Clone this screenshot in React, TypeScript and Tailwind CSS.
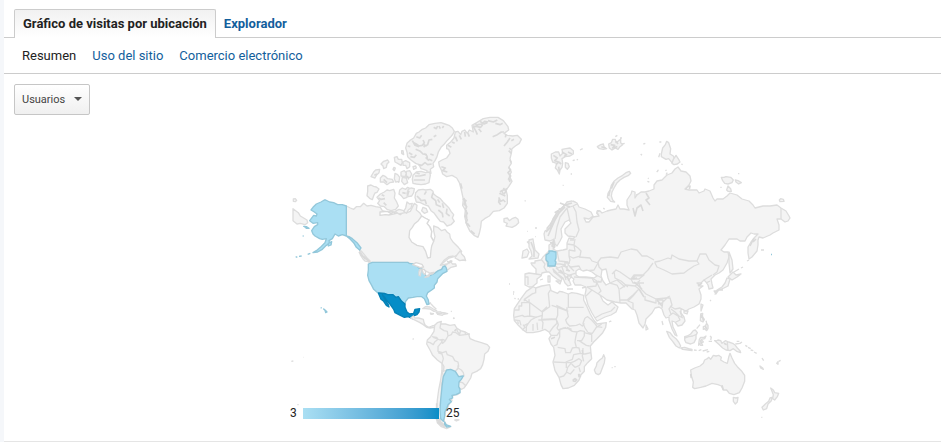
import React from "react";

type Tone = "land" | "light" | "dark";

interface Sheet {
  id: string;
  x: number;
  y: number;
  shapes: { d: string; tone?: Tone }[];
  water?: string[];
  borders?: string[];
  rough?: string[];
}

const tones: Record<Tone, string> = {
  land: "fill-[#f4f4f4] stroke-[#dddddd]",
  light: "fill-[#aadff3] stroke-[#92c7da]",
  dark: "fill-[#058dc7] stroke-[#0580b5]",
};

// Each sheet is drawn at three units per pixel around its own origin.
const sheets: Sheet[] = [
  {
    id: "north-america",
    x: 285,
    y: 190,
    shapes: [
      {
        d: "M184 48L196 54 206 58 214 50 226 50 236 40 246 48 258 46 272 50 286 52 292 62 306 66 322 64 334 70 346 66 356 64 366 68 376 64 382 52 388 40 396 46 394 60 404 68 410 78 420 84 432 90 426 100 436 112 440 124 438 140 446 154 450 140 446 122 446 108 458 112 470 122 480 118 486 126 494 132 496 144 504 156 520 172 530 184 526 190 508 200 492 204 480 214 466 226 484 222 478 232 452 248 436 250 420 242 396 228 368 217 258 217 246 210 232 196 224 180 206 158 192 142 184 138Z",
      },
      { d: "M482 226L490 220 496 212 502 222 512 222 514 228 498 232 488 240 482 236Z" },
      { d: "M510 204L518 192 526 182 530 192 538 200 542 212 534 210 524 212 518 208Z" },
      { d: "M24 56l16 12 6 10 10 6 10 6 2 8-8 6-14-4-10 2-12-10z" },
      { d: "M25 27l6-1 4 5-4 4-6-1z" },
      {
        tone: "light",
        d: "M118 30l-10 6-14 6-10 10-6 8 10 6 8 6-2 6-8-2-12 16 10 8 14-2 0 6-10 6-8 12 4 10 6 6 14 8 8 2 12-2-4 12-12 12-14 12-10 6 14-2 14-8 12-12 10-6-2-8 10-6 8-14 10 6 12-4 12 4 12 10 10 10 8 14 10 8 4-6-12-16-14-12-10-6-8-2V48l-12-4H158l-12-6-12-2-12-6z",
      },
      { tone: "light", d: "M56 109l8 1 8 5-8 0zM53 138l3 0M32 200l5 2M42 199l8-1M68 193l8-3M130 160l10-5-2 10-8 3zM107 353l3 1M116 357l5 4 5 5-4 2-2-7z" },
      {
        tone: "light",
        d: "M250 222L262 217 368 217 372 220 386 222 396 228 404 236 416 240 420 252 424 260 436 256 448 250 460 242 470 238 474 230 480 228 484 234 486 244 474 250 466 258 458 266 456 276 448 286 448 294 440 300 428 308 424 318 430 330 432 342 426 344 418 326 410 320 396 320 384 322 370 324 362 334 360 342 350 334 340 320 332 322 324 314 308 314 298 310 278 308 266 298 260 286 252 272 248 256 250 240Z",
      },
      {
        tone: "dark",
        d: "M280 309L298 310 308 314 324 314 332 322 340 320 350 334 360 342 360 352 366 366 374 372 386 370 390 358 404 356 402 366 396 374 384 378 382 386 370 380 358 382 346 376 330 368 326 358 316 344 306 332 296 318 292 314 300 330 310 344 312 351 304 346 296 334 288 328Z",
      },
      { d: "M413 356l8-6 14 1 10 6 10 5-8 2-12-7-14-1zM456 370l8-3 12 1 12 3-12 2-4 3-14-3zM436 369l8 3-6 1z" },
    ],
    water: [
      "M400 92L388 102 382 112 374 122 372 142 380 156 396 166 414 170 422 184 428 204 436 202 438 180 440 168 446 154 438 140 440 124 434 110 426 100 432 90 420 84 410 78Z",
      "M285 66l22-2 10 6 10-4 4 5-20 4-10-1-16 2zM340 68l14-2-8 8z",
      "M383 224l10-6 8 2 10 3 5 8-11 2-6-3zM404 238l4 0 0 8-2 12-4-2 0-10zM412 238l6 0 4 8-2 8-6-6zM420 262l8-6 6-2-3 6zM432 252l8-4 8-1-6 5z",
    ],
    borders: [
      "M216 165l8 12 2 18 8 12 6 6 10 2 5 6M228 182l10 12 8 10 10 10M466 226l12-16 14-10 14-2",
      "M428 332l3 12M430 342l8-4M436 340l10 10 8 8M498 365l2-2M505 383l2 4",
    ],
    rough: ["M222 186l8 10 12 12", "M236 200l8 6 10 10", "M486 214l8 4 8-6"],
  },
  {
    id: "arctic-islands",
    x: 355,
    y: 110,
    shapes: [
      {
        d: "M176 84L184 70 192 66 202 58 212 54 222 44 240 40 258 38 270 42 282 46 292 54 298 64 294 72 286 82 276 92 268 102 258 112 250 126 246 140 240 152 234 160 236 170 226 178 228 190 216 192 216 182 206 178 198 176 192 164 182 160 168 150 158 140 156 126 152 114 156 100 164 92Z",
      },
      { d: "M174 196L184 186 198 184 212 188 224 186 226 196 224 206 222 218 212 222 198 224 184 222 174 220 172 208Z" },
      { d: "M182 248L190 240 204 238 212 240 226 238 234 244 236 252 246 260 256 266 264 276 274 286 282 294 288 304 296 314 292 324 298 334 288 344 276 348 266 336 256 334 248 324 238 310 228 302 220 288 208 284 196 278 184 276 180 262Z" },
      { d: "M38 228l10-3 8 4 8 2 8 6-6 10-6 2-4 8-4 12-8-4-8-8 2-12z" },
      { d: "M66 262L76 252 88 246 96 240 104 242 116 238 120 250 118 264 124 274 130 288 122 298 108 302 96 298 88 290 76 288 68 280 74 272Z" },
      { d: "M48 200l8-14 6-6 12-2-2 10-8 8-4 8z" },
      { d: "M76 204l8-8 8 4 6 6 14 2 4 8-12 2-8 6-10-8-10 0z" },
      { d: "M78 162l8-8 12-4 4 6-6 6-2 10-8 4-2-8z" },
      { d: "M118 142l8-2 4 8 10 0 2 10-4 8-10-6-8-4z" },
      { d: "M144 156l8-4 12 6 0 12-8 6-4-10-8 0z" },
      { d: "M120 190l8 4 6 8-2 12-10 2-4-10zM138 186l10-4 6 8-4 10-12-2zM154 184l10-2 6 10-4 10-12 0zM142 202l12 2 4 14-10 6-8-10z" },
      { d: "M134 240l8-6 10 4 6-6 8 4-8 12-2 14-10 4-8-10-6-4z" },
      { d: "M160 238l8-4 10 2-2 12-6 10-10 2-4-10z M114 178l3-6 4 2-3 8zM140 122l4 0 2 12-6-4zM174 170l8-2 2 6-8 4zM204 292l10 4 4 10-10 4-8-8z" },
      { d: "M156 276l8 6 8-2-4 14-8 6-6 10-8-6 6-10zM120 304l12-6 14 4 4 6-18 4z" },
    ],
    rough: [
      "M176 98l8 4 8 6 10-2 6-8-4-8M184 80l10 4 6-8M204 102l8 6 6-4 4-14 10-2M182 118l14 6 8 8 12 2M208 130l8 8 2 12M166 140l12 2 6-8M190 164l10 2 10-8 8 6 12-2M236 52l8 4 4-8M252 48l4 8M172 92l8 14 12 4M206 112l6-8M236 80l8-4M262 54l4-6M212 142l10 10M162 128l10 6M158 108l8 2M226 132l10 4M222 148l10 4",
      "M176 210l18 0 16 0M180 198l14 0 18-4M184 188l10 4M186 258l10 10 2 4 12-2 4 12M214 244l-6 10M234 248l-4 14 12 10 2 12 14 6M248 268l6 10M262 280l4 14M276 296l-2 14 10 8M250 300l12 10 2 12M70 264l8 4 12-2M80 254l8 4M86 278l8 8M58 196l8-4M86 208l10 10M162 242l-4 12M142 248l10 2M156 198l6 10M130 214l2 4",
    ],
  },
  {
    id: "greenland",
    x: 430,
    y: 110,
    shapes: [
      {
        d: "M26 156L36 150 50 144 60 130 56 118 50 116 50 106 62 96 72 84 76 66 84 64 92 74 96 64 104 60 112 70 118 60 130 66 126 46 140 38 160 26 180 22 204 22 220 32 234 50 236 60 222 70 232 76 248 78 262 76 274 88 268 100 256 108 246 116 244 130 240 146 244 160 236 172 244 186 238 198 246 214 236 230 228 240 232 256 232 280 222 294 208 302 190 304 178 318 164 326 154 334 152 352 148 370 144 382 132 376 120 364 110 344 104 320 106 300 98 286 100 268 94 240 88 218 80 204 66 196 50 200 38 192 34 180 28 168Z",
      },
      { d: "M222 326L232 324 238 332 246 326 256 322 264 328 266 338 258 346 246 352 236 350 228 348 232 340 222 336Z" },
      { d: "M284 273l3-1M292 364l2 0M315 380l2 0M292 396l8-2 8 4-6 8z" },
    ],
    rough: [
      "M128 48l10 2 6-6 12-2 8-8 10 2M130 50l8 14 4 10M136 40l6 10 10 2 6-8M150 34l12 8 10-4M76 80l6 14M88 76l6 12M104 66l2 14M114 70l4 10M66 96l8 4M54 106l10 6M146 56l8 10M188 80l14-6 12-8 8 0M228 74l-2 8M240 84l-8 12-10 12M252 88l-8 4M238 114l6 6M236 122l8 8M240 150l4 8M174 32l16 4 12-6M196 40l14 4 8-4M236 172l6 8-8 8 8 10-6 8 4 10M234 206l8 6M210 246l10-6 12-4M206 262l6 12 8-4 6 6M212 284l-6-8 2-10M208 250l18 8M34 170l12 4-8 8 14 4M92 220l4 16M98 266l10 6-6 10 8 8-4 10M106 300l6 10-6 8 6 12-4 8 8 8M112 340l8 10M122 362l12 10M220 234l8 10-6 8",
      "M102 264l6 24M108 300l2 24M214 240l6 12",
    ],
  },
  {
    id: "arctic-russia",
    x: 540,
    y: 130,
    shapes: [
      { d: "M34 72L46 66 56 66 60 78 68 70 66 58 78 56 90 54 100 62 100 72 90 78 76 80 66 86 68 100 66 112 60 120 58 132 52 120 46 114 50 100 38 96 34 84Z" },
      { d: "M76 98l8 2 4 10-6 8-6-6zM98 92l6-2M110 90l4-2M120 60l8-4M92 132l4 0M68 166l3 0" },
      { d: "M172 50l10-6 8-2 2 8 8 6-10 2-12-2zM206 42l8-4 4-10 8 0 2 10 8-6 6-4 0 10 6 6-8 6-6 8-8-4-10 6-8-6zM226 20l6-4M246 42l8-2M240 24l6 0M310 42l6-2M302 72l4 4" },
      { d: "M202 202L204 190 210 180 214 166 222 154 234 144 248 136 258 128 268 124 272 130 266 136 252 142 240 150 230 160 222 174 216 186 214 198 218 210 224 216 212 214Z" },
      { d: "M364 72l4-18 8-10 4-10 6 4 6 18-2 16 10 6 6 14-10 6-10-12-8 2-14-8z" },
      { d: "M356 82l4-12M324 144l2 2M322 154l6 2M352 122l4-2M376 122l4-2" },
      { d: "M172 242l6 0 4 8-6 6-6-6zM190 234l4 4" },
    ],
    rough: [
      "M40 76l12 8-8 8 12 4M48 104l8-8 8 6M66 66l14 8-8 6M84 66l12 6M56 110l2 14M184 50l12 4M212 44l12 2-6 8 14-4M228 34l6 8",
      "M210 180l-4 18M222 156l-8 20M44 248l10-6 4 8 8-10M56 236l10 4 6-14 8 4 6-12 12 0M80 216l10 6 10-8 10 6M20 296l10-12 12-18 16-18",
      "M284 212l4 16 6 14 4-12 6 0M310 190l4 16 14-8 4 16 2 12M290 192l8 12M318 192l10 8M272 240l8 22",
    ],
  },
  {
    id: "siberian-islands",
    x: 650,
    y: 130,
    shapes: [
      { d: "M66 100l4-12 8-12 8 12 4 8-8 6-10 2zM94 102l4 2M28 36l6 0" },
      { d: "M214 142l8 0 6-2 14 2 8 8-4 8-12 4-10-2-6-8zM256 150l8 2 10 6-8 4-8-6zM264 131l4 0M211 172l4 0" },
      { d: "M230 180l4-12 8 8 2 8-10 0zM388 210l4-4 8 2 2 6-12 1zM24 122l-4 4M48 134l4-6" },
    ],
    rough: ["M106 180l6-10 8-2-2 10M92 188l6-8 8 2M346 232l8-2 2 8-8-2M0 204v26"],
  },
];

const southSheets: Sheet[] = [
  {
    id: "south-america",
    x: 280,
    y: 310,
    shapes: [
      { d: "M392 24l8-6 4 6 12 0 14 4 2 10 4 8 10 6 10-4 8-2 0 6-14 2-10-2-10-8-10-6-12-6z" },
      {
        d: "M464 46L472 38 484 34 482 42 496 42 510 46 524 44 530 54 542 62 556 66 566 72 570 86 584 92 604 98 622 104 629 112 624 124 614 132 612 148 608 164 602 176 590 184 576 190 572 204 562 220 552 234 544 238 536 232 540 248 532 254 520 256 514 264 516 272 508 280 504 290 498 302 494 318 492 332 500 346 512 350 500 356 484 350 472 338 468 320 470 300 472 270 476 240 482 210 486 180 486 160 472 150 458 136 450 120 440 102 442 90 452 80 462 64Z",
      },
      {
        tone: "light",
        d: "M500 180L512 178 526 184 536 200 550 198 544 208 537 216 536 230 540 238 540 248 528 254 516 256 518 264 508 268 514 275 504 284 500 296 494 306 494 318 490 334 482 326 480 300 482 270 486 230 490 200Z",
      },
      { tone: "light", d: "M494 336l4 8 14 5-12 2-6-8z" },
      { d: "M452 10l10 1M468 6l14 0 4 4-12 1zM490 10l8 0M524 25l-4-1M398 86l3 2M34 154l6-1M70 142l1 0M52 284l4 0M524 330l6-1 7 1-8 3z" },
    ],
    borders: [
      "M482 42l-2 12 12 8 10 2 2 14-8 14-8-4M488 88l-4 10-10 12 0 14 14 4 10-4 4 10 16 6 6 12 10 4 2 12-4 12M442 96l8 2 10 6 4-8 10-8-4-6-14-2M460 82l20 8 8-2M504 78l10-4 4-8 10 2 10 8 18-2 14-2M530 54l2 10 8 10M542 62l-4 12M556 66v10M486 160l6 10-2 14 10-4M474 128l12 4 4 14-4 14M526 184l8-10 0-8M534 174l10 6 6 8 2 10-12 2M536 216l12 2 10 10M486 180l4 20-6 24 0 30-4 34M496 92l-8 8-4-10",
    ],
    rough: ["M470 300l4 14-2 16 8 8 8 2 6 10M472 336l14 10 10 6M468 326l12 8 8 8M478 324l6 20 10 4M470 280l0 32M524 64l4-6"],
  },
  {
    id: "africa",
    x: 505,
    y: 270,
    shapes: [
      {
        d: "M84 50L92 54 110 48 134 44 138 62 158 70 164 64 174 66 190 72 200 68 216 70 228 74 236 76 236 90 246 110 256 132 266 150 276 162 304 158 302 172 292 190 276 206 266 216 256 228 258 250 260 266 248 278 238 290 238 304 228 314 222 330 208 346 190 354 174 356 168 344 162 322 150 302 144 276 150 256 146 232 138 222 132 206 138 196 132 186 120 178 104 184 84 188 66 188 52 178 40 166 28 152 26 136 28 116 40 98 48 86 64 64 76 56Z",
      },
      { d: "M276 278l8-8 8-6 4-10 4 10-2 14-6 16-6 16-6 4-8-4-4-10 6-12z" },
      { d: "M28 85l4 1M38 88l4-2M24 66l4 0M314 154l5 0M320 293l3 0M328 290l4 0" },
    ],
    borders: [
      "M28 120h14l0-12 8 0 0-10h20M84 70l-26 18 0 6M92 54l0 14-10 4M72 88l0 8 40 30 22-16-2-20-2-20 6-10M58 88l16 12v38l-16 2-6-4-24 6M112 126l0 10-20 6-14 8-8 10-12 6M74 138l22 4M112 136l-2 12 44-2 4-10 0-24-18-6M154 106l32 16V112M190 72v40h46M186 122l4 18-8 10 4 10 8 8 20-2 10-4 8 6 6-8M158 112l32 12M126 110l-14 14M100 150l10 0 4 8-2 20M84 162v20M96 158l2 22M70 160l-6 10 0 14M54 164l6 8-8 8M28 150l16 2 4 14M38 154l2 8M110 150l44-2 2 12-12 12-10 14M156 152l4 12 -4 10 4 6 24-8M138 196h18l8-12 2-8M164 184l0 16-6 14-2 10-10 4M164 178l12-4 14 2 12 8 14 2-4 16-2 14 4 16-12 2-6 14-14 0-2-12-22-4M146 276l38 2 16 0M216 186l10-4 12 2 0 14-8 14-14 0M238 188l8 2 14 4 0 22M248 188l14 2 12-18 16-10M240 144l-6 16 6 14 8 12M240 144l8-4 12 10 12 14 4 6 16 2M222 212l22 14 10 2M212 232l10 2 4 16 -20 4 -4 14 -20 8M226 250l14 2 18-4M234 234l-2 24 4 16M198 278l10-4 14-8 8 6-6 14-14 6-10-10M200 278l-12 14-4 16-8 10 -14 4M184 278v16M184 306l12 6 12-14M222 292l4 14M186 172l14 6",
    ],
    rough: ["M205 329l5-3 5 3-4 5-6-1zM221 314l3 0 2 5-4 1z", "M232 240l2 14M138 206l12-4"],
  },
  {
    id: "oceania",
    x: 650,
    y: 300,
    shapes: [
      {
        d: "M122 210L134 204 150 198 160 190 164 180 172 176 176 172 182 178 190 166 198 168 206 166 214 172 212 180 222 186 232 190 236 172 240 160 246 174 254 190 262 200 274 212 284 226 284 244 276 264 268 278 252 284 238 280 230 270 220 270 214 258 204 254 186 250 168 258 152 262 134 266 128 262 130 246 124 228Z",
      },
      { d: "M250 292l8 2 6-2-2 14-6 6-6-8z" },
      { d: "M362 264l8 6 4 8 12 2-4 10-8 10-6-4 2-12-4-10zM366 292l-2 10-10 10-4 14-10 4-4-8 10-10 10-8 4-10zM334 352l3 0" },
      { d: "M330 198l8 6 2 4-8-4zM336 174l5 8M380 190l4-5 0 8zM386 184l6-3" },
      { d: "M50 94L60 98 68 108 78 116 86 126 92 138 88 144 78 138 68 124 58 112Z" },
      { d: "M92 144l12-2 12 4 10 2 0 4-12-2-16-2zM132 150l8 1M146 152l8-3M158 153l16-4M170 156l8-2" },
      { d: "M104 110l8-2 10-6 8-10 6-2 6 8-4 8 0 10-6 12-10 4-14-4-4-8z" },
      { d: "M146 132l2-14 4-6 10 0 6-4-4 8-10 2 6 8-6 2 4 8-6 0-4-6-2 6zM180 108l4 4-2 8M192 122l6 0M176 124l10 0" },
      { d: "M196 124L204 120 212 122 216 130 226 122 236 126 248 130 256 136 262 144 270 152 272 158 260 154 250 146 240 152 228 150 218 144 208 134Z" },
      { d: "M152 42l6-2-1 12 6 6-4 8-8-4zM160 80l6-2 4-8 4 6 0 10-4 6-6-6-4 2zM140 86l10-12M168 62l2 6M256 132l14-2 6-4M260 124l8 0M286 136l6 4M294 142l8 4M302 150l8 2M312 156l8 4" },
    ],
    borders: ["M232 126l2 26M104 114l12-4 12-2 10-4"],
    rough: ["M216 256l4 14M122 222l2 12M154 44l0 10M158 50l2 12M166 78l4 10M152 120l2 12M222 130l8 4"],
  },
];

const eurasia =
  "M567 202L572 201L577 203L579 207L585 209L591 212L593 216L589 219L584 218L586 222L589 222L593 217L599 216L597 212L600 211L602 213L607 211L611 210L616 209L618 205L620 209L624 209L629 210L627 205L627 200L631 194L632 191L635 192L635 198L637 195L641 192L645 192L649 191L654 189L654 185L657 181L662 180L665 177L667 175L672 173L675 169L678 167L681 171L686 172L690 176L691 181L689 185L685 189L689 190L697 190L699 193L704 191L705 189L710 191L713 198L715 201L717 199L723 199L727 196L730 193L737 195L742 199L749 201L753 205L755 208L763 206L770 206L777 205L781 208L786 211L789 216L790 218L788 221L785 222L781 219L777 219L779 225L779 230L773 233L770 235L763 238L759 237L758 240L758 245L757 251L752 257L749 259L748 253L748 247L751 242L755 237L758 234L754 234L751 233L747 237L745 241L740 241L737 239L729 239L725 245L721 250L724 252L728 252L729 257L727 263L723 270L719 273L715 275L711 279L712 284L713 288L709 289L708 285L706 282L704 280L701 283L697 283L700 286L703 286L699 289L701 295L701 299L699 304L694 307L689 309L686 311L681 309L681 313L684 317L685 321L682 325L678 326L675 322L672 321L673 327L675 331L677 336L675 335L672 329L669 320L669 317L666 318L664 315L662 309L659 307L655 308L652 313L646 319L645 324L643 328L639 323L637 315L635 310L632 309L629 306L626 303L621 303L615 302L611 301L607 300L603 297L600 295L603 301L608 305L612 302L618 307L616 312L611 315L605 317L597 321L595 318L592 313L588 305L586 298L585 295L586 290L586 287L581 285L575 285L573 281L574 279L571 277L569 280L571 285L568 286L565 283L563 278L559 275L555 271L553 269L554 272L559 276L562 279L561 281L557 279L553 276L549 272L546 272L542 273L541 276L537 279L537 283L532 287L529 287L525 285L525 274L529 273L536 274L536 269L532 265L531 263L535 263L535 261L541 260L543 257L547 253L549 251L549 245L552 243L554 247L553 249L557 251L563 250L567 249L567 243L569 238L573 239L575 237L568 236L565 233L565 229L571 223L569 220L565 222L561 229L562 237L560 241L557 246L555 244L554 239L550 241L545 240L544 234L545 231L551 227L555 218L561 210Z";

const eurasiaWater = [
  "M576 275l0-4 3-2 4 2 4-1 5 2 5 4-3 2-8-1-7 0z",
  "M602 270l4-1 1 4 1 5 2 5-4 2-3-4-2-5z",
];

const eurasiaIslands = [
  "M529 240l4-1 1 6 1 5 4 4-1 4-9 1 3-3-1-5-2-4z",
  "M523 251l4-2 2 3-2 5-5 1z",
  "M556 281l5 0-1 3zM548 276l2 0 0 6-2 0zM567 289l6 0M582 288l4-1M540 280l3-1M535 228l2 0",
  "M728 277l5-5 3 3 5-1-4 3-5 3z",
  "M730 279l-2 7-4 2-5 2-4 4 2-4 5-3 3-4 2-5zM714 291l4 0-2 3zM719 290l4 0",
  "M729 252l3 8 1 9-3 4-1-10zM734 272l5-3M741 268l2-1M747 261l2-1M761 250l3 0",
  "M701 304l2 1-2 6zM684 311l4 0-1 3-3-1zM646 325l2 4-2 1zM662 321l1 4M609 322l2-1M710 301l1-1M509 284l1 0M513 294l1 0",
];

const eurasiaBorders = [
  "M555 239l2-12 3-10 7-9M567 208l3 13M567 208l6-2 3 6 1 10 2 8-3 7M573 206l4-2",
  "M557 251l2 10 9 1M569 250l6 1-1-6-7-1M570 240l4 0M575 239l-1 6 4 3 3 3-1 5-7 2-4-2 0-6M579 257l11 1 2 3 6 2-4 7-8 1M569 256l1 4-2 5 3 2 8-1 2 4M555 264l5 0 6 1M549 267l6-1 3 2 5-2 5 1M541 259l4 5-1 3 3 5M546 258l2 9M562 267l2 6 5 2 7-2M558 272l6 2 2 6M567 276l5 0M536 274l6 1M525 277l3 0 0 8M556 268l6 5M564 263l6 0M565 266l4 5M563 274l4 4M569 266l5 5M574 277l18 1 5 3-1 5-9 1",
  "M596 275l6 3-1 4-3-1M592 278l2 4 7 0M597 283l4 8-3 3M587 287l5 3-6 6M592 290l8 5M595 318l7-4 9-3 4-4M610 283l7 2 2 4 1 14M620 289l6-4 9 1 4 3-6 6-6 5-7 0M610 283l7-3 8 7M603 271l-4-4-1-5 3-4 9-1 8 1 3-6 10-3 6 1 5 6 5 0 7 4M653 263l-5 7-5 5-9 0-3 4M612 274l4-4 4 2 10 7 5-1M614 271l1 7 6 3 7 6M631 279l4-3 9-1-5 4-6 0M631 279l2 4 5 0 2-3M635 286l4-3 5 0M637 291l-4 5-5 5 5 2 0 6M638 281l3 8 5 5 10 5 10-1 4-2M645 296l0 4 11 3 0-4M657 300l6 0-1 8M658 304l4-1 5-5 3 0 2 7-3 4 2 5M670 306l5 3 5-1 4 2M671 309l4 3 4 4 4 2M669 316l4-3 5 3 2 4-4 2M680 311l2 6",
  "M655 262l5-1 8-3 3 1 1-4 7 4 10 2 8 0 2 3-5 2-6 4-4 3-12 1-8-4-7-3-2-4zM697 261l3-7 6 0 3 6 6 5 4 1-2 6-4 3M712 275l-8 5",
  "M781 208v11M706 283l4-2",
];

const eurasiaRough =
  "M546 232l4-4 3-9 5-8 7-6 7-2M548 236l3-7 4-9 4-7 6-6M550 243l3-1-1 4 3 2M553 240l2 7M566 270l4 1M560 270l3 3M567 276l2 5M531 242l3 8 0 7M560 203l10 4M633 208l2 8 2-8 4-3 2 6M646 193l3 5-3 2 4 5M756 239l-3 3M750 246l4-8M631 279l6-1M634 282l8 7M657 300l5 6M698 286l4-3M639 289l5 8";

function SheetLayer({ sheet }: { sheet: Sheet }) {
  return (
    <g transform={`translate(${sheet.x} ${sheet.y}) scale(${1 / 3})`} strokeWidth={4}>
      {sheet.shapes
        .filter((s) => !s.tone)
        .map((s, i) => (
          <path key={i} d={s.d} className={tones.land} />
        ))}
      {sheet.borders?.map((d, i) => (
        <path key={i} d={d} className="fill-none stroke-[#dddddd]" />
      ))}
      {sheet.rough?.map((d, i) => (
        <path key={i} d={d} className="fill-none stroke-[#dadada]" strokeWidth={5} />
      ))}
      {sheet.shapes
        .filter((s) => s.tone)
        .map((s, i) => (
          <path key={i} d={s.d} className={tones[s.tone as Tone]} />
        ))}
      {sheet.water?.map((d, i) => (
        <path key={i} d={d} className="fill-white stroke-[#dadada]" />
      ))}
    </g>
  );
}

function WorldMap() {
  return (
    <svg
      viewBox="280 115 520 326"
      className="block h-[326px] w-[520px]"
      strokeLinejoin="round"
      role="img"
      aria-label="Usuarios por país"
    >
      {sheets.map((s) => (
        <SheetLayer key={s.id} sheet={s} />
      ))}
      <g strokeWidth={1.3}>
        <path d={eurasia} className={tones.land} />
        {eurasiaIslands.map((d) => (
          <path key={d} d={d} className={tones.land} />
        ))}
        {eurasiaBorders.map((d) => (
          <path key={d} d={d} className="fill-none stroke-[#dddddd]" />
        ))}
        <path d={eurasiaRough} className="fill-none stroke-[#dadada]" strokeWidth={1.6} />
        {eurasiaWater.map((d) => (
          <path key={d} d={d} className="fill-white stroke-[#dddddd]" />
        ))}
        <path d="M549 251l3 0 4 1 0 6-1 3 1 1-1 4-7 0 0-4-2-2 0-5 3-2z" className={tones.light} />
        <path d="M771 254.500h1" className="stroke-[#92c7da]" />
      </g>
      {southSheets.map((s) => (
        <SheetLayer key={s.id} sheet={s} />
      ))}
    </svg>
  );
}

export default function App() {
  return (
    <div className="border-l-4 border-[#f5f7fa] bg-white font-[Roboto,sans-serif] text-[13px] text-[#222222]">
      <main className="border-b border-b-[#e5e5e5]">
        <nav aria-label="Vistas" className="flex items-end border-b border-[#cccccc] pt-[9px] pl-[10px] font-bold">
          <a
            href="#grafico"
            aria-current="page"
            className="-mb-px h-[29px] rounded-t-xs border border-b-0 border-[#cccccc] bg-linear-to-b from-[#f1f1f1] to-white px-2 leading-[28px]"
          >
            Gráfico de visitas por ubicación
          </a>
          <a href="#explorador" className="h-7 px-2 leading-[30px] text-[#125e9c]">
            Explorador
          </a>
        </nav>
        <nav aria-label="Secciones" className="flex h-9 items-center gap-4 border-b border-[#cccccc] pl-[18px]">
          <a href="#resumen" aria-current="page">
            Resumen
          </a>
          <a href="#uso" className="text-[#125e9c]">
            Uso del sitio
          </a>
          <a href="#comercio" className="text-[#125e9c]">
            Comercio electrónico
          </a>
        </nav>
        <div className="pt-[10px] pl-[10px]">
          <div className="relative h-[31px] w-[76px]">
            <select
              aria-label="Métrica"
              className="h-full w-full appearance-none rounded-xs border border-[#c6c6c6] bg-linear-to-b from-white to-[#f0f0f0] pt-0.5 pl-[7px] text-[11px] text-[#444444]"
            >
              <option>Usuarios</option>
            </select>
            <svg viewBox="0 0 8 4" className="pointer-events-none absolute top-[13px] right-2 h-1 w-2 fill-[#555555]">
              <path d="M0 0h8L4 4z" />
            </svg>
          </div>
        </div>
        <figure className="relative pl-[276px]">
          <WorldMap />
          <figcaption className="absolute bottom-5 left-[286px] flex items-center text-[12px] leading-4 text-[#222222]">
            <span className="w-[13px]">3</span>
            <span className="h-[11px] w-[136px] bg-linear-to-r from-[#aadff3] to-[#058dc7]" />
            <span className="pl-[7px]">25</span>
          </figcaption>
        </figure>
      </main>
    </div>
  );
}
